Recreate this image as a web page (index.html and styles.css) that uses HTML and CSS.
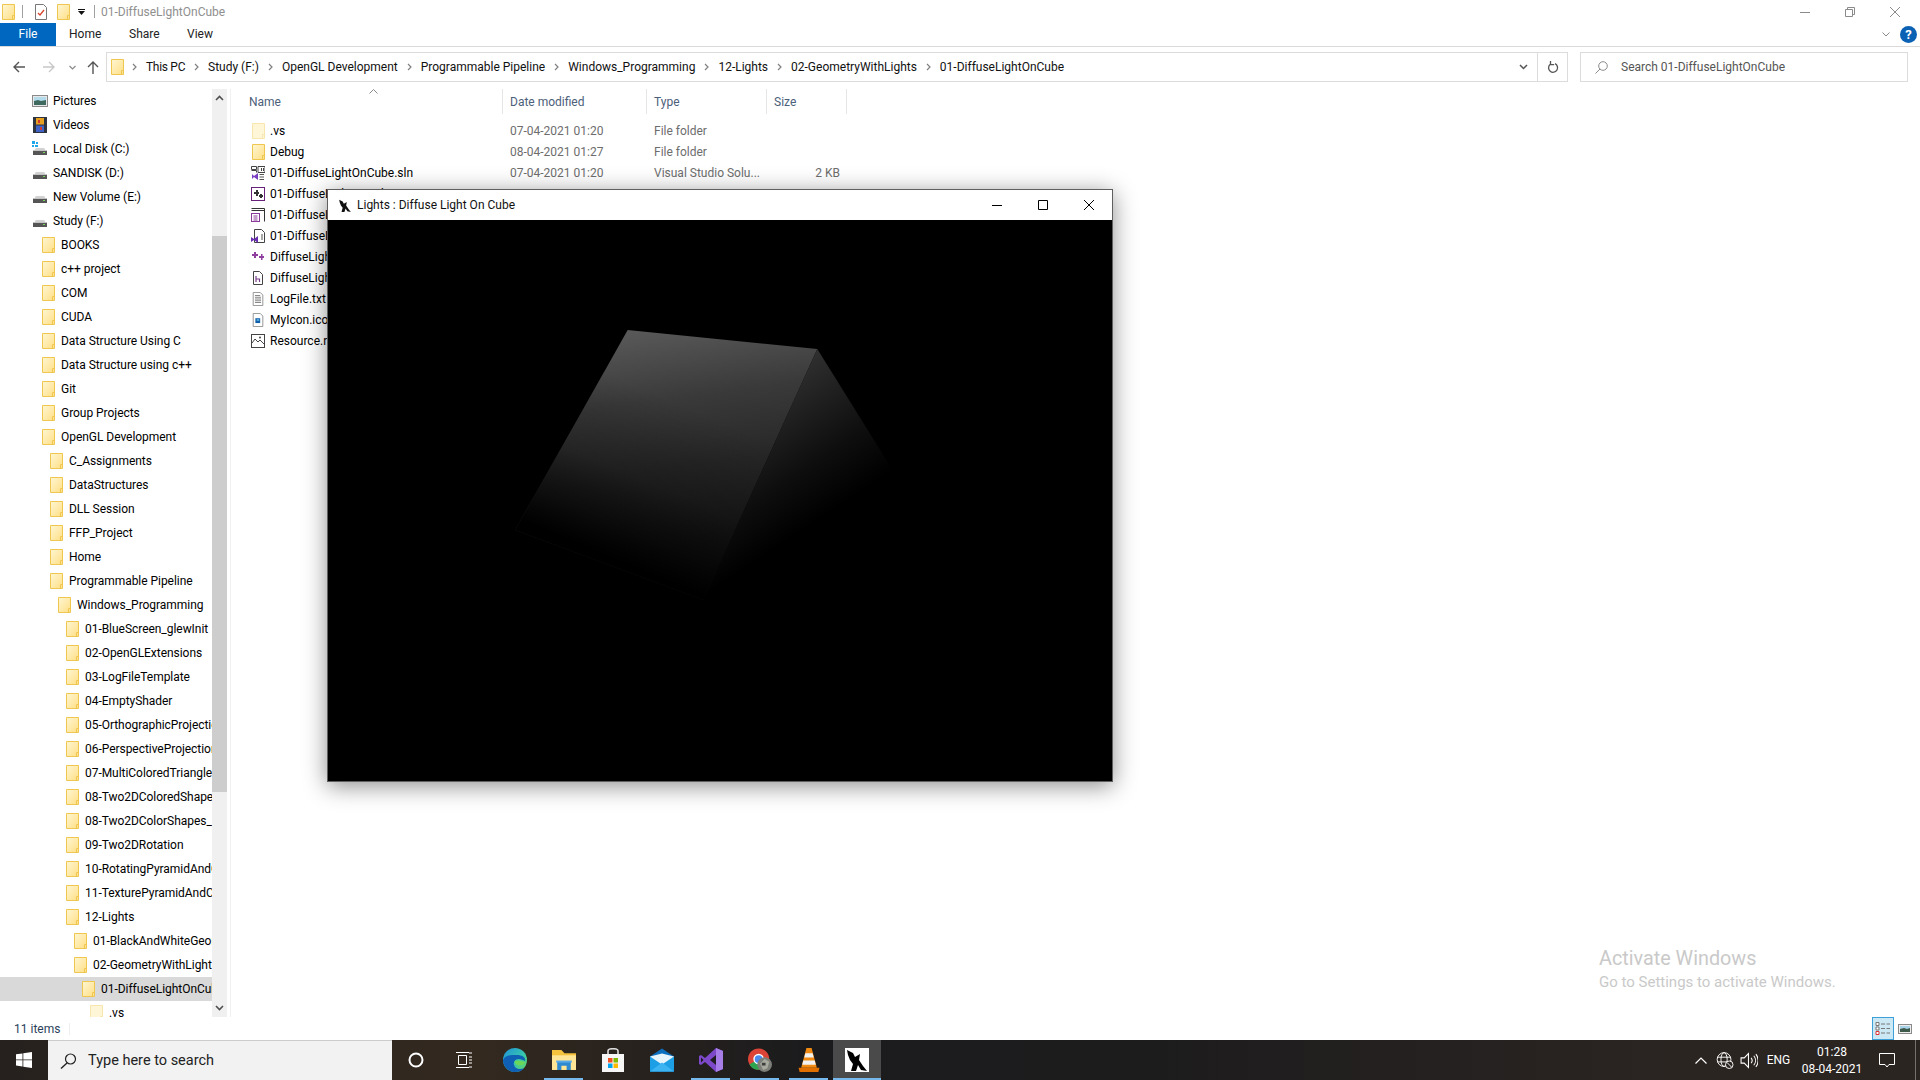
FILE: index.html
```html
<!DOCTYPE html>
<html lang="en">
<head>
<meta charset="utf-8">
<title>01-DiffuseLightOnCube</title>
<link rel="stylesheet" href="styles.css">
</head>
<body>
<svg class="sprite" xmlns="http://www.w3.org/2000/svg">
  <defs>
    <linearGradient id="fg" x1="0" y1="0" x2="1" y2="1"><stop offset="0" stop-color="#fff6d2"/><stop offset="1" stop-color="#ffdf86"/></linearGradient>
    <symbol id="folder" viewBox="0 0 13 16"><path d="M.5.5h12v15H.5z" fill="url(#fg)" stroke="#eec650"/><path d="M10.5 15.5v-4h2" fill="none" stroke="#eec650"/></symbol>
    <symbol id="folder-pale" viewBox="0 0 13 16"><path d="M.5.5h12v15H.5z" fill="#fff6d8" stroke="#f7e6ae"/><path d="M10.5 15.5v-4h2" fill="none" stroke="#f7e6ae"/></symbol>
    <symbol id="drive" viewBox="0 0 16 16"><path d="M2.500 9l1.500-2h8l1.500 2z" fill="#d2d2d2"/><rect x="1" y="9" width="14" height="5" fill="#555"/><rect x="1" y="9" width="14" height="1" fill="#c4c4c4"/><rect x="11" y="11" width="2" height="1" fill="#7fd45a"/></symbol>
    <symbol id="wolf" viewBox="0 0 24 24"><path d="M2 2l6 3 2 4 5-3-1 6 4 6 4 5-6-1-3-5-2 6H6l2-7-3-4-2-5z" fill="currentColor"/></symbol>
    <symbol id="chev" viewBox="0 0 5 8"><path d="M1 1l3 3-3 3" fill="none" stroke="#808080" stroke-width="1.2"/></symbol>
  </defs>
</svg>

<div class="app">
  <header class="titlebar">
    <svg class="ic-folder t-first"><use href="#folder"/></svg>
    <span class="t-sep t-sep-a"></span>
    <svg class="t-doc" viewBox="0 0 12 16"><path d="M.5.5h8l3 3v12H.5z" fill="#fff" stroke="#777"/><path d="M3 9l2 2 4-5" fill="none" stroke="#d8442b" stroke-width="1.3"/></svg>
    <svg class="ic-folder t-second"><use href="#folder"/></svg>
    <svg class="t-down" viewBox="0 0 7 6"><path d="M0 0h7v1H0zM0 2h7L3.500 6z" fill="#111"/></svg>
    <span class="t-sep t-sep-b"></span>
    <span class="t-name">01-DiffuseLightOnCube</span>
    <div class="win-ctrls">
      <svg class="wc" viewBox="0 0 10 10"><path d="M0 5.500h10" stroke="#8a8a8a" fill="none"/></svg>
      <svg class="wc" viewBox="0 0 10 10"><path d="M.5 2.500h7v7h-7zM2.500 2.500v-2h7v7h-2" stroke="#8a8a8a" fill="none"/></svg>
      <svg class="wc" viewBox="0 0 10 10"><path d="M0 0l10 10M10 0L0 10" stroke="#8a8a8a" fill="none"/></svg>
    </div>
  </header>

  <nav class="ribbon">
    <span class="tab tab-file">File</span>
    <span class="tab tab-home">Home</span>
    <span class="tab tab-share">Share</span>
    <span class="tab tab-view">View</span>
    <svg class="rib-chev" viewBox="0 0 8 5"><path d="M.5.500L4 4l3.500-3.500" fill="none" stroke="#8a8a8a"/></svg>
    <span class="help">?</span>
  </nav>

  <div class="navbar">
    <svg class="n-back" viewBox="0 0 12 12"><path d="M12 6H1M6 1L1 6l5 5" fill="none" stroke="#555" stroke-width="1.4"/></svg>
    <svg class="n-fwd" viewBox="0 0 12 12"><path d="M0 6h11M6 1l5 5-5 5" fill="none" stroke="#c8c8c8" stroke-width="1.4"/></svg>
    <svg class="n-drop" viewBox="0 0 7 5"><path d="M.5 1l3 3 3-3" fill="none" stroke="#8a8a8a" stroke-width="1.2"/></svg>
    <svg class="n-up" viewBox="0 0 12 13"><path d="M6 13V1M1 6l5-5 5 5" fill="none" stroke="#555" stroke-width="1.4"/></svg>
    <div class="address">
      <svg class="ic-folder a-folder"><use href="#folder"/></svg>
      <svg class="chev a-chev0"><use href="#chev"/></svg>
      <span class="crumb crumb-first">This PC</span><svg class="chev"><use href="#chev"/></svg>
      <span class="crumb">Study (F:)</span><svg class="chev"><use href="#chev"/></svg>
      <span class="crumb">OpenGL Development</span><svg class="chev"><use href="#chev"/></svg>
      <span class="crumb">Programmable Pipeline</span><svg class="chev"><use href="#chev"/></svg>
      <span class="crumb">Windows_Programming</span><svg class="chev"><use href="#chev"/></svg>
      <span class="crumb">12-Lights</span><svg class="chev"><use href="#chev"/></svg>
      <span class="crumb">02-GeometryWithLights</span><svg class="chev"><use href="#chev"/></svg>
      <span class="crumb">01-DiffuseLightOnCube</span>
      <svg class="a-drop" viewBox="0 0 9 6"><path d="M1 1l3.500 3.500L8 1" fill="none" stroke="#555" stroke-width="1.5"/></svg>
      <span class="a-refresh"><svg viewBox="0 0 12 14"><path d="M3 4.500A4.500 4.500 0 1 0 8 3.700M3.500 1v3.600h3.600" fill="none" stroke="#555" stroke-width="1.3"/></svg></span>
    </div>
    <div class="search">
      <svg class="s-ic" viewBox="0 0 13 13"><circle cx="8" cy="5" r="4.300" fill="none" stroke="#8a8a8a"/><path d="M5 8l-4.500 4.500" stroke="#8a8a8a" fill="none"/></svg>
      <span>Search 01-DiffuseLightOnCube</span>
    </div>
  </div>

  <main class="main">
    <aside class="tree">
      <div class="tree-list">
        <div class="row l0"><svg class="r-ic-16" viewBox="0 0 16 12"><rect x=".5" y=".5" width="15" height="11" fill="#e8e8e8" stroke="#8a8a8a"/><rect x="2" y="2" width="12" height="4" fill="#b5dcec"/><path d="M2 6l4-1 3 1 5-1v5H2z" fill="#3f6a60"/></svg><span>Pictures</span></div>
        <div class="row l0"><svg class="r-ic-16" viewBox="0 0 16 16"><rect x="1" y="0" width="14" height="16" fill="#2e3340"/><rect x="4" y="1" width="8" height="6.500" fill="#e8a020"/><rect x="4" y="8.500" width="8" height="6.500" fill="#3f62c4"/><path d="M6 3h2v3H6zM8 10h2v3H8z" fill="#d43b2c"/></svg><span>Videos</span></div>
        <div class="row l0"><svg class="r-ic-16" viewBox="0 0 16 16"><use href="#drive"/><path d="M0 0h3v3H0zM4 1h2v2H4zM0 4h2v2H0zM3 4h3v2H3z" fill="#1ea7e8"/></svg><span>Local Disk (C:)</span></div>
        <div class="row l0"><svg class="r-ic-16"><use href="#drive"/></svg><span>SANDISK (D:)</span></div>
        <div class="row l0"><svg class="r-ic-16"><use href="#drive"/></svg><span>New Volume (E:)</span></div>
        <div class="row l0"><svg class="r-ic-16"><use href="#drive"/></svg><span>Study (F:)</span></div>
        <div class="row l1"><svg class="ic-folder"><use href="#folder"/></svg><span>BOOKS</span></div>
        <div class="row l1"><svg class="ic-folder"><use href="#folder"/></svg><span>c++ project</span></div>
        <div class="row l1"><svg class="ic-folder"><use href="#folder"/></svg><span>COM</span></div>
        <div class="row l1"><svg class="ic-folder"><use href="#folder"/></svg><span>CUDA</span></div>
        <div class="row l1"><svg class="ic-folder"><use href="#folder"/></svg><span>Data Structure Using C</span></div>
        <div class="row l1"><svg class="ic-folder"><use href="#folder"/></svg><span>Data Structure using c++</span></div>
        <div class="row l1"><svg class="ic-folder"><use href="#folder"/></svg><span>Git</span></div>
        <div class="row l1"><svg class="ic-folder"><use href="#folder"/></svg><span>Group Projects</span></div>
        <div class="row l1"><svg class="ic-folder"><use href="#folder"/></svg><span>OpenGL Development</span></div>
        <div class="row l2"><svg class="ic-folder"><use href="#folder"/></svg><span>C_Assignments</span></div>
        <div class="row l2"><svg class="ic-folder"><use href="#folder"/></svg><span>DataStructures</span></div>
        <div class="row l2"><svg class="ic-folder"><use href="#folder"/></svg><span>DLL Session</span></div>
        <div class="row l2"><svg class="ic-folder"><use href="#folder"/></svg><span>FFP_Project</span></div>
        <div class="row l2"><svg class="ic-folder"><use href="#folder"/></svg><span>Home</span></div>
        <div class="row l2"><svg class="ic-folder"><use href="#folder"/></svg><span>Programmable Pipeline</span></div>
        <div class="row l3"><svg class="ic-folder"><use href="#folder"/></svg><span>Windows_Programming</span></div>
        <div class="row l4"><svg class="ic-folder"><use href="#folder"/></svg><span>01-BlueScreen_glewInit</span></div>
        <div class="row l4"><svg class="ic-folder"><use href="#folder"/></svg><span>02-OpenGLExtensions</span></div>
        <div class="row l4"><svg class="ic-folder"><use href="#folder"/></svg><span>03-LogFileTemplate</span></div>
        <div class="row l4"><svg class="ic-folder"><use href="#folder"/></svg><span>04-EmptyShader</span></div>
        <div class="row l4"><svg class="ic-folder"><use href="#folder"/></svg><span>05-OrthographicProjection</span></div>
        <div class="row l4"><svg class="ic-folder"><use href="#folder"/></svg><span>06-PerspectiveProjection</span></div>
        <div class="row l4"><svg class="ic-folder"><use href="#folder"/></svg><span>07-MultiColoredTriangle</span></div>
        <div class="row l4"><svg class="ic-folder"><use href="#folder"/></svg><span>08-Two2DColoredShapes</span></div>
        <div class="row l4"><svg class="ic-folder"><use href="#folder"/></svg><span>08-Two2DColorShapes_1</span></div>
        <div class="row l4"><svg class="ic-folder"><use href="#folder"/></svg><span>09-Two2DRotation</span></div>
        <div class="row l4"><svg class="ic-folder"><use href="#folder"/></svg><span>10-RotatingPyramidAndCube</span></div>
        <div class="row l4"><svg class="ic-folder"><use href="#folder"/></svg><span>11-TexturePyramidAndCube</span></div>
        <div class="row l4"><svg class="ic-folder"><use href="#folder"/></svg><span>12-Lights</span></div>
        <div class="row l5"><svg class="ic-folder"><use href="#folder"/></svg><span>01-BlackAndWhiteGeometry</span></div>
        <div class="row l5"><svg class="ic-folder"><use href="#folder"/></svg><span>02-GeometryWithLights</span></div>
        <div class="row l6 sel"><svg class="ic-folder"><use href="#folder"/></svg><span>01-DiffuseLightOnCube</span></div>
        <div class="row l7"><svg class="ic-folder"><use href="#folder-pale"/></svg><span>.vs</span></div>
      </div>
      <div class="scrollbar">
        <svg class="sb-arrow" viewBox="0 0 9 6"><path d="M1 5l3.500-3.500L8 5" fill="none" stroke="#505050" stroke-width="1.6"/></svg>
        <div class="sb-gap"></div>
        <div class="sb-thumb"></div>
        <svg class="sb-arrow" viewBox="0 0 9 6"><path d="M1 1l3.500 3.500L8 1" fill="none" stroke="#505050" stroke-width="1.6"/></svg>
      </div>
    </aside>

    <section class="files">
      <div class="head">
        <div class="hc hc-name">Name<svg class="sort" viewBox="0 0 9 5"><path d="M.5 4.500l4-4 4 4" fill="none" stroke="#8a8a8a"/></svg></div>
        <div class="hc">Date modified</div>
        <div class="hc">Type</div>
        <div class="hc">Size</div>
      </div>
      <div class="frow"><div class="fname"><svg class="ic-folder"><use href="#folder-pale"/></svg><span>.vs</span></div><span class="meta">07-04-2021 01:20</span><span class="meta">File folder</span><span class="meta size"></span></div>
      <div class="frow"><div class="fname"><svg class="ic-folder"><use href="#folder"/></svg><span>Debug</span></div><span class="meta">08-04-2021 01:27</span><span class="meta">File folder</span><span class="meta size"></span></div>
      <div class="frow"><div class="fname"><svg class="ic-file" viewBox="0 0 14 14"><path d="M.5 4.500h5v2M.5.500h5v3h-5zM7 .5h7v6H7z" fill="#fff" stroke="#444"/><path d="M10 2h1v3h-1zM12 2h1v3h-1z" fill="#444"/><path d="M1 8l2 2 4-3v7l-4-3-2 2z" fill="#7a3fc0"/><path d="M8.500 8.500H13M8.500 11H13M8.500 13.500H13" stroke="#555"/></svg><span>01-DiffuseLightOnCube.sln</span></div><span class="meta">07-04-2021 01:20</span><span class="meta">Visual Studio Solu...</span><span class="meta size">2 KB</span></div>
      <div class="frow"><div class="fname"><svg class="ic-file" viewBox="0 0 14 14"><rect x=".5" y=".5" width="13" height="13" fill="#fff" stroke="#68217a"/><path d="M3 5h2V3h2v2h1v2H7v2H5V7H3zM8 8h1V7h2v1h1v2h-1v1H9v-1H8z" fill="#333"/></svg><span>01-DiffuseLightOnCube.vcxproj</span></div><span class="meta">08-04-2021 01:27</span><span class="meta">VC++ Project</span><span class="meta size">8 KB</span></div>
      <div class="frow"><div class="fname"><svg class="ic-file" viewBox="0 0 14 14"><path d="M.5.5h13v13M.5 2.500h13" fill="#fff" stroke="#333"/><rect x=".5" y="5.500" width="8" height="8" fill="#fff" stroke="#8a3a9a"/><path d="M2.500 8h4M2.500 10h4M2.500 12h4" stroke="#8a3a9a"/></svg><span>01-DiffuseLightOnCube.vcxproj.filters</span></div><span class="meta">08-04-2021 01:27</span><span class="meta">VC++ Project Filte...</span><span class="meta size">1 KB</span></div>
      <div class="frow"><div class="fname"><svg class="ic-file" viewBox="0 0 14 14"><path d="M3.500.5h7l3 3v10h-10z" fill="#fff" stroke="#444"/><path d="M0 8l3 2 4-3v7l-4-3-3 2z" fill="#6a2fb0"/><path d="M10 6h2M10 8h2M10 10h2" stroke="#555"/></svg><span>01-DiffuseLightOnCube.vcxproj.user</span></div><span class="meta">07-04-2021 01:20</span><span class="meta">Per-User Project ...</span><span class="meta size">1 KB</span></div>
      <div class="frow"><div class="fname"><svg class="ic-file" viewBox="0 0 14 14"><path d="M3 2h2v2h2v2H5v2H3V6H1V4h2zM10 4h1.500v2H13v2h-1.500v2H10V8H8V6h2z" fill="#8f3f9f"/></svg><span>DiffuseLightOnCube.cpp</span></div><span class="meta">08-04-2021 01:27</span><span class="meta">C++ Source</span><span class="meta size">22 KB</span></div>
      <div class="frow"><div class="fname"><svg class="ic-file" viewBox="0 0 14 14"><path d="M2.500.5h6l3 3v10h-9z" fill="#fff" stroke="#444"/><path d="M5 5v6M5 8h3.500v3" fill="none" stroke="#7a3f8a" stroke-width="1.200"/></svg><span>DiffuseLightOnCube.h</span></div><span class="meta">07-04-2021 01:20</span><span class="meta">C Header</span><span class="meta size">1 KB</span></div>
      <div class="frow"><div class="fname"><svg class="ic-file" viewBox="0 0 14 16"><path d="M1.500.5h8l3 3v12h-11z" fill="#fff" stroke="#888"/><path d="M3.500 4h6M3.500 6h7M3.500 8h7M3.500 10h7M3.500 12h7" stroke="#777"/></svg><span>LogFile.txt</span></div><span class="meta">08-04-2021 01:27</span><span class="meta">Text Document</span><span class="meta size">1 KB</span></div>
      <div class="frow"><div class="fname"><svg class="ic-file" viewBox="0 0 14 16"><path d="M1.500.5h8l3 3v12h-11z" fill="#fff" stroke="#888"/><rect x="4" y="6" width="5.500" height="5.500" fill="#0f5fa8"/><rect x="5.500" y="7" width="3" height="2" fill="#5aaee0"/></svg><span>MyIcon.ico</span></div><span class="meta">07-04-2021 01:20</span><span class="meta">Icon</span><span class="meta size">9 KB</span></div>
      <div class="frow"><div class="fname"><svg class="ic-file" viewBox="0 0 14 14"><rect x=".5" y=".5" width="13" height="13" fill="#fff" stroke="#444"/><path d="M1 9l3-4 3 3 2-2 4 4" fill="none" stroke="#444"/><circle cx="9" cy="3.500" r="1" fill="#444"/></svg><span>Resource.rc</span></div><span class="meta">07-04-2021 01:20</span><span class="meta">Resource Script</span><span class="meta size">1 KB</span></div>
    </section>
  </main>

  <footer class="status">
    <span class="st-count">11 items</span>
    <span class="st-div"></span>
    <div class="st-views">
      <span class="vbtn on"><svg viewBox="0 0 16 13"><path d="M1 .5h3v3H1zM1 5h3v3H1z" fill="#fff" stroke="#777"/><path d="M1 9.500h3v3H1z" fill="#fff" stroke="#d33"/><path d="M6 2h4M11.500 2H15M6 6.500h4M11.500 6.500H15M6 11h4M11.500 11H15" stroke="#777"/></svg></span>
      <span class="vbtn"><svg viewBox="0 0 14 10"><rect x=".5" y=".5" width="13" height="9" fill="#eee" stroke="#8a8a8a"/><rect x="2" y="2" width="10" height="3" fill="#a9d3e8"/><path d="M2 5l4-1 3 1 3-1v4H2z" fill="#3e5a4a"/></svg></span>
    </div>
  </footer>

  <div class="taskbar">
    <div class="start"><svg viewBox="0 0 16 16"><path d="M0 2.300L6.500 1.400V7.500H0zM7.300 1.300L16 0V7.500H7.300zM0 8.300H6.500V14.500L0 13.600zM7.300 8.300H16V16L7.300 14.700z" fill="#fff"/></svg></div>
    <div class="tsearch">
      <svg viewBox="0 0 17 16"><circle cx="10.500" cy="6" r="5" fill="none" stroke="#222" stroke-width="1.200"/><path d="M7 10l-6 5.500" stroke="#222" stroke-width="1.400" fill="none"/></svg>
      <span>Type here to search</span>
    </div>
    <div class="tb"><svg viewBox="0 0 16 16" class="tb16"><circle cx="8" cy="8" r="6.500" fill="none" stroke="#fff" stroke-width="2"/></svg></div>
    <div class="tb tb-last-sys"><svg viewBox="0 0 16 16" class="tb16"><path d="M2.500 3.500h8v9h-8zM0 .5h13M0 15.500h13M13 5h3M13 8h3M13 11h3M13 1h3M13 15h3" fill="none" stroke="#fff"/></svg></div>
    <div class="tb"><svg viewBox="0 0 24 24" class="tb24"><defs><linearGradient id="eg" x1="0" y1="0" x2="1" y2="1"><stop offset="0" stop-color="#1f8fd8"/><stop offset=".55" stop-color="#35c5b0"/><stop offset="1" stop-color="#6ad75a"/></linearGradient></defs><circle cx="12" cy="12" r="12" fill="url(#eg)"/><path d="M0 12C0 18 5 24 12 24c4 0 7-1 9-4-4 2-9 1-10-3-1-3 1-6 5-6 2 0 4 1 6 2 1-3-2-6-8-6C8 7 2 7 0 12z" fill="#0f5fb4"/><path d="M12 13c3-1 6 0 10 1 0 3-5 4-8 3-2-1-3-3-2-4z" fill="#6ad75a"/></svg></div>
    <div class="tb on"><svg viewBox="0 0 23 19" class="tb24"><path d="M0 0h9l3 3h11v16H0z" fill="#f5c23e"/><path d="M0 5h23v14H0z" fill="#ffe595"/><path d="M5 11l7-0h6v8h-4v-4H9v4H5z" fill="#2f8ad0"/><path d="M4 10h15v2H4z" fill="#5aaae6"/></svg></div>
    <div class="tb"><svg viewBox="0 0 24 24" class="tb24"><path d="M7 6V3c0-3 10-3 10 0v3" fill="none" stroke="#ddd" stroke-width="1.600"/><path d="M1 6h22v18H1z" fill="#f6f6f6"/><path d="M7 10h4.500v4.500H7z" fill="#f25022"/><path d="M12.500 10H17v4.500h-4.500z" fill="#7fba00"/><path d="M7 15.500h4.500V20H7z" fill="#00a4ef"/><path d="M12.500 15.500H17V20h-4.500z" fill="#ffb900"/></svg></div>
    <div class="tb"><svg viewBox="0 0 24 23" class="tb24"><path d="M0 8L12 0l12 8v15H0z" fill="#0c6fbe"/><path d="M0 8h24v15H0z" fill="#1d9fe6"/><path d="M0 8l12 8 12-8-12-3z" fill="#e6f4fc"/><path d="M0 23l12-9 12 9z" fill="#3cb4f2"/></svg></div>
    <div class="tb"><svg viewBox="0 0 24 24" class="tb24"><path d="M17 0l7 3v18l-7 3L6 14l-4 3-2-1V8l2-1 4 3z" fill="#7d49c9"/><path d="M17 7v10l-6-5z" fill="#1e1c1e"/><path d="M2 9.500L4.500 12 2 14.500z" fill="#1e1c1e"/><path d="M17 0l7 3v18l-7 3z" fill="#a77de8"/></svg></div>
    <div class="tb"><svg viewBox="0 0 26 26" class="tb24"><circle cx="11.500" cy="12" r="11.500" fill="#db4437"/><path d="M11.500 12L1.500 18A11.500 11.500 0 0 0 13 23.500z" fill="#2da44e"/><path d="M11.500 12h11.500a11.500 11.500 0 0 1-10 11.500z" fill="#f4c20d"/><circle cx="11.500" cy="12" r="5" fill="#4a8bf0" stroke="#fff" stroke-width="1.500"/><circle cx="18" cy="18" r="8" fill="#7c7f78"/><path d="M13 17l5-5 5 3-2 7-5 1zM18 19l3 3-5 2z" fill="#a8aaa0"/><path d="M15 16h4v3h-4z" fill="#3d403c"/></svg></div>
    <div class="tb"><svg viewBox="0 0 20 23" class="tb24"><path d="M7.500 0h5l5 19H2.500z" fill="#f08a12"/><path d="M6.500 5h7l1 4h-9zM4.500 12h11l1 4h-13z" fill="#f2f2f2"/><path d="M0 19h20l-1 4H1z" fill="#e06f00"/></svg></div>
    <div class="tb active"><span class="appicon"><svg><use href="#wolf"/></svg></span></div>
    <div class="tray">
      <span class="ty"><svg viewBox="0 0 12 7" class="ty12"><path d="M.5 6.500L6 1l5.500 5.500" fill="none" stroke="#fff" stroke-width="1.200"/></svg></span>
      <span class="ty"><svg viewBox="0 0 18 18" class="ty16"><circle cx="8" cy="8" r="7.300" fill="none" stroke="#fff"/><ellipse cx="8" cy="8" rx="3.300" ry="7.300" fill="none" stroke="#fff"/><path d="M1 5.500h14M1 10.500h14" stroke="#fff"/><circle cx="13.500" cy="13.500" r="4" fill="#2b2522" stroke="#fff"/><path d="M11 11l5 5" stroke="#fff"/></svg></span>
      <span class="ty"><svg viewBox="0 0 17 15" class="ty16"><path d="M1 5h3l4-4v13l-4-4H1z" fill="none" stroke="#fff"/><path d="M10.500 5a4 4 0 0 1 0 5M13 3a7 7 0 0 1 0 9M15 1.500a9.500 9.500 0 0 1 0 12" fill="none" stroke="#fff"/></svg></span>
      <span class="ty-eng">ENG</span>
      <div class="clock"><span>01:28</span><span>08-04-2021</span></div>
      <span class="notif"><svg viewBox="0 0 16 15"><path d="M.5.5h15v11H10l-2 2.500-2-2.500H.5z" fill="none" stroke="#fff"/></svg></span>
      <span class="showdesk"></span>
    </div>
  </div>
</div>

<div class="watermark">
  <div class="wm-a">Activate Windows</div>
  <div class="wm-b">Go to Settings to activate Windows.</div>
</div>

<div class="glwin">
  <div class="gl-title">
    <svg class="gl-icon"><use href="#wolf"/></svg>
    <span>Lights : Diffuse Light On Cube</span>
    <div class="gl-ctrls">
      <svg viewBox="0 0 10 10"><path d="M0 5.500h10" stroke="#000" fill="none"/></svg>
      <svg viewBox="0 0 10 10"><path d="M.5.500h9v9h-9z" stroke="#000" fill="none"/></svg>
      <svg viewBox="0 0 10 10"><path d="M0 0l10 10M10 0L0 10" stroke="#000" fill="none"/></svg>
    </div>
  </div>
  <svg class="gl-canvas" viewBox="328 220 784 561">
    <defs>
      <linearGradient id="lf" gradientUnits="userSpaceOnUse" x1="650" y1="330" x2="690" y2="610">
        <stop offset="0" stop-color="#585858"/><stop offset=".25" stop-color="#3a3a3a"/><stop offset=".5" stop-color="#272727"/><stop offset=".75" stop-color="#191919"/><stop offset="1" stop-color="#111"/>
      </linearGradient>
      <linearGradient id="lfade" gradientUnits="userSpaceOnUse" x1="677" y1="402" x2="612" y2="558">
        <stop offset="0" stop-color="#000" stop-opacity="0"/><stop offset=".5" stop-color="#000" stop-opacity=".25"/><stop offset=".8" stop-color="#000" stop-opacity=".65"/><stop offset="1" stop-color="#000"/>
      </linearGradient>
      <linearGradient id="rf" gradientUnits="userSpaceOnUse" x1="817" y1="349" x2="896" y2="468">
        <stop offset="0" stop-color="#303030"/><stop offset=".3" stop-color="#202020"/><stop offset=".65" stop-color="#0e0e0e"/><stop offset="1" stop-color="#000"/>
      </linearGradient>
    </defs>
    <path d="M627.700 330L817.300 349L703.300 600L515 530z" fill="url(#lf)"/>
    <path d="M627.700 330L817.300 349L703.300 600L515 530z" fill="url(#lfade)"/>
    <path d="M817.300 349L930 530L703.300 600z" fill="url(#rf)"/>
  </svg>
</div>
</body>
</html>
```

FILE: styles.css
```css
* { box-sizing: border-box; }
html, body { margin: 0; height: 100%; }
body {
  position: relative;
  overflow: hidden;
  background: #fff;
  font-family: "Roboto", "Liberation Sans", sans-serif;
  font-size: 12px;
  color: #000;
}
svg { display: block; flex: none; }
.sprite { width: 0; height: 0; }
.app { display: flex; flex-direction: column; height: 1080px; }
.ic-folder { width: 13px; height: 16px; }

/* title bar */
.titlebar { display: flex; align-items: center; height: 23px; flex: none; padding-left: 2px; }
.t-sep { width: 1px; height: 13px; background: #a0a0a0; }
.t-sep-a { margin-left: 7px; }
.t-doc { width: 12px; height: 16px; margin-left: 12px; }
.t-second { margin-left: 10px; }
.t-down { width: 7px; height: 6px; margin-left: 8px; }
.t-sep-b { margin-left: 9px; }
.t-name { margin-left: 6px; color: #8f8f8f; }
.win-ctrls { margin-left: auto; display: flex; gap: 35px; padding-right: 20px; }
.wc { width: 10px; height: 10px; }

/* ribbon */
.ribbon { display: flex; align-items: center; height: 24px; flex: none; border-bottom: 1px solid #dadada; color: #222; }
.tab { line-height: 23px; height: 23px; }
.tab-file { width: 56px; background: #0067c0; color: #fff; text-align: center; }
.tab-home { margin-left: 13px; width: 60px; }
.tab-share { width: 58px; }
.tab-view { width: 40px; }
.rib-chev { width: 8px; height: 5px; margin-left: auto; }
.help { width: 17px; height: 17px; border-radius: 50%; background: #0b62b4; color: #fff; font-weight: 700; font-size: 13px; line-height: 17px; text-align: center; margin: 0 3px 0 10px; }

/* navigation bar */
.navbar { display: flex; align-items: center; height: 42px; flex: none; padding: 0 12px 2px 13px; color: #111; }
.n-back, .n-fwd { width: 12px; height: 12px; }
.n-fwd { margin-left: 18px; }
.n-drop { width: 7px; height: 5px; margin-left: 14px; }
.n-up { width: 12px; height: 13px; margin-left: 11px; }
.address { display: flex; align-items: center; height: 30px; width: 1462px; margin-left: 7px; border: 1px solid #dcdcdc; padding-left: 4px; }
.a-folder { width: 13px; height: 16px; }
.chev { width: 5px; height: 8px; margin: 0 9px; }
.a-chev0 { margin-left: 8px; }
.crumb-first { width: 39px; white-space: nowrap; letter-spacing: -.3px; }
.a-drop { width: 9px; height: 6px; margin-left: auto; }
.a-refresh { display: flex; align-items: center; justify-content: center; width: 30px; height: 28px; margin-left: 9px; border-left: 1px solid #dcdcdc; }
.a-refresh svg { width: 12px; height: 14px; }
.search { display: flex; align-items: center; width: 328px; height: 30px; margin-left: 12px; border: 1px solid #dcdcdc; padding-left: 14px; color: #555; }
.s-ic { width: 13px; height: 13px; margin-right: 13px; }

/* main area */
.main { flex: 1; display: flex; min-height: 0; }
.tree { display: flex; width: 231px; flex: none; border-right: 1px solid #f0f0f0; padding-right: 3px; }
.tree-list { width: 212px; flex: none; overflow: hidden; }
.row { display: flex; align-items: center; height: 24px; white-space: nowrap; letter-spacing: -.04px; }
.r-ic-16 { width: 16px; height: 16px; margin-right: 5px; }
.row .ic-folder { margin-right: 6px; }
.l0 { padding-left: 32px; }
.l1 { padding-left: 42px; }
.l2 { padding-left: 50px; }
.l3 { padding-left: 58px; }
.l4 { padding-left: 66px; }
.l5 { padding-left: 74px; }
.l6 { padding-left: 82px; }
.l7 { padding-left: 90px; }
.sel { background: #d9d9d9; }
.scrollbar { width: 15px; display: flex; flex-direction: column; align-items: center; background: #f0f0f0; }
.sb-arrow { width: 9px; height: 6px; margin: 6px 0; }
.sb-gap { flex: none; height: 129px; }
.sb-thumb { width: 100%; height: 556px; background: #cdcdcd; margin-bottom: auto; }

.files { flex: 1; padding-left: 16px; }
.head { display: grid; grid-template-columns: 256px 144px 120px 80px; height: 25px; color: #4c607a; }
.hc { display: flex; align-items: center; padding-left: 7px; border-right: 1px solid #e5e5e5; position: relative; }
.hc-name { padding-left: 2px; }
.sort { width: 9px; height: 5px; position: absolute; left: 122px; top: 0; }
.frow { display: grid; grid-template-columns: 256px 144px 120px 80px; height: 21px; align-items: center; white-space: nowrap; }
.frow:nth-child(2) { margin-top: 6px; }
.fname { display: flex; align-items: center; padding-left: 5px; overflow: hidden; }
.fname .ic-folder { margin-right: 5px; }
.ic-file { width: 14px; height: 14px; margin-right: 5px; }
.fname .ic-file { margin-left: -1px; }
.meta { padding-left: 7px; color: #6d6d6d; }
.size { text-align: right; padding-right: 7px; }

/* status */
.status { display: flex; align-items: center; height: 23px; flex: none; padding-left: 14px; color: #2b3f5c; }
.st-count { width: 55px; }
.st-div { width: 1px; height: 12px; background: #eee; }
.st-views { margin-left: auto; display: flex; align-items: center; gap: 4px; padding-right: 8px; }
.vbtn { display: flex; align-items: center; justify-content: center; width: 14px; height: 23px; }
.vbtn.on { width: 22px; background: #cce8f5; border: 1px solid #3ea0d8; }
.vbtn.on svg { width: 16px; height: 13px; }
.vbtn svg { width: 14px; height: 10px; }

/* taskbar */
.taskbar { display: flex; height: 40px; flex: none; background: linear-gradient(90deg, #26211e 0, #33291f 25%, #1b1b1d 42%, #1d1c1d 60%, #2b2522 88%); color: #fff; }
.start { width: 48px; display: flex; align-items: center; justify-content: center; }
.start svg { width: 16px; height: 16px; }
.tsearch { width: 344px; display: flex; align-items: center; background: #f2f2f2; border-top: 1px solid #ccc; color: #222; font-size: 14.500px; padding-left: 12px; }
.tsearch svg { width: 17px; height: 16px; margin-right: 11px; }
.tb { width: 49px; display: flex; align-items: center; justify-content: center; position: relative; }
.tb:nth-child(3), .tb:nth-child(4) { width: 48px; }
.tb-last-sys { margin-right: 2px; }
.tb16 { width: 16px; height: 16px; }
.tb24 { width: 24px; height: 24px; }
.tb.on::after { content: ""; position: absolute; left: 5px; right: 5px; bottom: 0; height: 2px; background: #76b9ed; }
.tb:nth-child(9)::after, .tb:nth-child(10)::after, .tb:nth-child(11)::after { content: ""; position: absolute; left: 5px; right: 5px; bottom: 0; height: 2px; background: #76b9ed; }
.active { width: 48px; background: #4a4a4a; }
.tb.active::after { content: ""; position: absolute; left: 0; right: 0; bottom: 0; height: 2px; background: #76b9ed; }
.appicon { display: flex; align-items: center; justify-content: center; width: 24px; height: 24px; background: #fff; color: #000; }
.appicon svg { width: 24px; height: 24px; }
.tray { margin-left: auto; display: flex; align-items: center; }
.ty { width: 24px; display: flex; align-items: center; justify-content: center; }
.ty12 { width: 12px; height: 7px; }
.ty16 { width: 18px; height: 17px; }
.ty-eng { width: 35px; text-align: center; }
.clock { width: 72px; display: flex; flex-direction: column; align-items: center; gap: 3px; line-height: 14px; }
.notif { width: 38px; display: flex; justify-content: center; }
.notif svg { width: 16px; height: 15px; }
.showdesk { width: 1px; height: 40px; background: #77716e; margin: 0 4px 0 9px; }

/* activation watermark */
.watermark { position: absolute; left: 1599px; top: 946px; color: #c9c9c9; white-space: nowrap; }
.wm-a { font-size: 19.800px; line-height: 25px; }
.wm-b { font-size: 15px; line-height: 22px; }

/* floating GL window */
.glwin { position: absolute; left: 327px; top: 189px; width: 786px; height: 593px; background: #fff; border: 1px solid #5f5f5f; box-shadow: 0 4px 22px rgba(0,0,0,.45); display: flex; flex-direction: column; }
.gl-title { display: flex; align-items: center; height: 30px; flex: none; padding-left: 10px; color: #111; }
.gl-icon { width: 14px; height: 15px; margin-right: 5px; color: #111; }
.gl-ctrls { margin-left: auto; display: flex; gap: 36px; padding-right: 18px; }
.gl-ctrls svg { width: 10px; height: 10px; }
.gl-canvas { flex: 1; width: 100%; min-height: 0; background: #000; }
```
